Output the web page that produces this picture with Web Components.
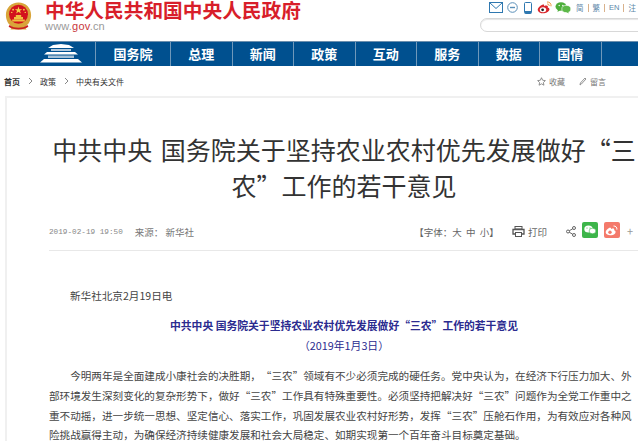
<!DOCTYPE html>
<html lang="zh">
<head>
<meta charset="utf-8">
<title>中共中央 国务院关于坚持农业农村优先发展做好“三农”工作的若干意见</title>
<style>
  html, body { margin: 0; padding: 0; background: #fff; overflow: hidden; height: 441px; }
  body { font-family: "Noto Sans CJK SC", "Liberation Sans", sans-serif; text-spacing-trim: space-all; }
</style>
</head>
<body>
<gov-header></gov-header>
<gov-nav>
  <a>国务院</a><a>总理</a><a>新闻</a><a>政策</a><a>互动</a><a>服务</a><a>数据</a><a>国情</a>
</gov-nav>
<gov-crumbs></gov-crumbs>
<gov-article>
  <span slot="title">中共中央 国务院关于坚持农业农村优先发展做好“三农”工作的若干意见</span>
  <p>新华社北京2月19日电</p>
  <h2>中共中央 国务院关于坚持农业农村优先发展做好“三农”工作的若干意见</h2>
  <h3>（2019年1月3日）</h3>
  <p class="body">今明两年是全面建成小康社会的决胜期，“三农”领域有不少必须完成的硬任务。党中央认为，在经济下行压力加大、外部环境发生深刻变化的复杂形势下，做好“三农”工作具有特殊重要性。必须坚持把解决好“三农”问题作为全党工作重中之重不动摇，进一步统一思想、坚定信心、落实工作，巩固发展农业农村好形势，发挥“三农”压舱石作用，为有效应对各种风险挑战赢得主动，为确保经济持续健康发展和社会大局稳定、如期实现第一个百年奋斗目标奠定基础。</p>
</gov-article>

<script>
class GovHeader extends HTMLElement {
  constructor() {
    super();
    this.attachShadow({ mode: "open" });
    this.shadowRoot.innerHTML = `
      <style>
        :host { display: flex; height: 41px; justify-content: space-between; overflow: hidden; }
        .brand { display: flex; gap: 13px; padding-left: 5px; }
        .emblem { width: 27px; height: 32px; }
        .name { color: #d81e2a; font-size: 19.700px; font-weight: 700; line-height: 20px; white-space: nowrap; }
        .url { font: 11px/12px "Liberation Sans", sans-serif; color: #9a9a9a; letter-spacing: .2px; }
        .url b { color: #c8363c; font-weight: 400; }
        .tools { width: 158px; }
        .icons { display: flex; align-items: center; height: 15px; font-size: 7.500px; color: #5a86a8; white-space: nowrap; }
        .icons svg { display: block; flex: none; }
        .icons i { width: 1px; height: 8px; background: #d9b28c; margin: 0 4px; }
        .search { margin-top: 3px; height: 12px; border: 1px solid #d8d8d8; border-radius: 7px; box-shadow: inset 0 1px 1px #e6e6e6; margin-right: -20px; background: #fff; }
      </style>
      <div class="brand">
        <svg class="emblem" viewBox="0 0 30 32">
          <path d="M15 1C7 1 1 7 1 15c0 6 3 11 7 13l-2 3h18l-2-3c4-2 7-7 7-13 0-8-6-14-14-14z" fill="#d9a53a"/>
          <circle cx="15" cy="14" r="10.500" fill="#d3121d"/>
          <path d="M15 5.500l1 3h3.100l-2.500 1.800 1 3-2.600-1.900-2.600 1.900 1-3-2.500-1.800H14z" fill="#f6d24a"/>
          <g fill="#f6d24a"><circle cx="9" cy="9" r="1"/><circle cx="21" cy="9" r="1"/><circle cx="7.500" cy="12" r=".8"/><circle cx="22.500" cy="12" r=".8"/></g>
          <path d="M8 20h14v2H8zM10 17h10v2.500H10zM12 15h6v2h-6z" fill="#f0c040"/>
          <path d="M5 26c3 2.500 6 3 10 3s7-.5 10-3l1 2c-3 2-7 3-11 3s-8-1-11-3z" fill="#c8201f"/>
        </svg>
        <div>
          <div class="name">中华人民共和国中央人民政府</div>
          <div class="url">www.<b>gov</b>.cn</div>
        </div>
      </div>
      <div class="tools">
        <div class="icons">
          <svg width="14" height="11" viewBox="0 0 14 11" style="margin-left:9px" fill="none" stroke="#2f78b0"><rect x=".5" y=".5" width="13" height="10"/><path d="M.5.5 7 6.500 13.500.5"/></svg>
          <svg width="11" height="11" viewBox="0 0 11 11" style="margin-left:4px" fill="none" stroke="#5a8fb8"><circle cx="5.500" cy="5.500" r="4.800"/><path d="M3 5.500h5" stroke-width="1.400"/></svg>
          <svg width="8" height="12" viewBox="0 0 8 12" style="margin-left:6px"><rect x=".5" y=".5" width="7" height="11" rx="1" fill="#fff" stroke="#2f78b0"/><rect x="1" y="9" width="6" height="2.500" fill="#2f78b0"/></svg>
          <svg width="15" height="13" viewBox="0 0 15 13" style="margin-left:5px"><path d="M6 3.500C3 4.500.5 7 .8 9.200c.4 2.300 3.600 3.400 6.400 3 3-.4 5.300-2 5.300-3.900 0-1.100-1-1.700-1.800-1.900.5-1.300.1-2.100-1.600-2-.9 0-1.800.4-2 .6.200-1-.1-1.800-1.100-1.500z" fill="#d9262c"/><ellipse cx="6" cy="8.700" rx="3.200" ry="2.500" fill="#fff"/><circle cx="5.600" cy="8.800" r="1.400" fill="#222"/><path d="M10 1c2.500-.3 4.500 1.700 4 4.300M10.200 3c1.200-.2 2.200.8 1.900 2" fill="none" stroke="#f0963a" stroke-width="1"/></svg>
          <svg width="16" height="12" viewBox="0 0 16 12" style="margin-left:3px"><ellipse cx="6" cy="4.500" rx="5.500" ry="4.300" fill="#4cae3a"/><path d="M3 7.500 2.500 10l3-2z" fill="#4cae3a"/><ellipse cx="11.300" cy="7" rx="4.500" ry="3.600" fill="#5cb848" stroke="#fff" stroke-width=".6"/><path d="M13 9.500l.8 2-2.500-1.500z" fill="#5cb848"/><circle cx="4.200" cy="3.500" r=".7" fill="#fff"/><circle cx="7.800" cy="3.500" r=".7" fill="#fff"/></svg>
          <span style="margin-left:5px">简</span><i></i><span>繁</span><i></i><span style="font-family:'Liberation Sans',sans-serif">EN</span><i></i><span>注</span>
        </div>
        <div class="search"></div>
      </div>
    `;
  }
}

class GovNav extends HTMLElement {
  constructor() {
    super();
    this.attachShadow({ mode: "open" });
    this.shadowRoot.innerHTML = `
      <style>
        :host { display: flex; height: 24px; background: #00508f; border-top: 1px solid #6c8fae; }
        .home { width: 96px; flex: none; display: flex; justify-content: flex-end; padding-right: 13px; box-sizing: border-box; border-right: 1px solid #6f98ba; }
        svg { display: block; margin-top: 2px; }
        slot { display: contents; }
        ::slotted(a) {
          flex: 0 0 61.500px; box-sizing: border-box; text-align: center; color: #fff; font-size: 13px; font-weight: 700;
          line-height: 24px; border-right: 1px solid #6f98ba;
        }
        ::slotted(a:first-of-type) { flex-basis: 75px; }
      </style>
      <div class="home">
        <svg width="42" height="19" viewBox="0 0 42 19" fill="#fff">
          <path d="M13 1 21 0l8 1 5 3H8z"/>
          <path d="M11 5h20v2H11z" opacity=".7"/>
          <path d="M7 8h28l3 2.500H4z"/>
          <path d="M8 11.500h26V14H8z" opacity=".65"/>
          <path d="M4 15h34l4 3.500H0z"/>
        </svg>
      </div>
      <slot></slot>
    `;
  }
}

class GovCrumbs extends HTMLElement {
  constructor() {
    super();
    this.attachShadow({ mode: "open" });
    this.shadowRoot.innerHTML = `
      <style>
        :host { display: flex; height: 30px; align-items: center; padding: 0 32px 0 4px; font-size: 8px; color: #333; justify-content: space-between; }
        .path, .acts { display: flex; align-items: center; }
        b { font-weight: 700; }
        .sep { margin: 0 7.500px; display: block; }
        .acts { color: #777; gap: 3px; }
        .acts svg { display: block; }
        .acts span { margin-right: 11px; }
        .acts span:last-child { margin-right: 0; }
      </style>
      <div class="path">
        <b>首页</b>
        <svg class="sep" width="5" height="8" viewBox="0 0 5 8" fill="none" stroke="#888"><path d="M1 1l3 3-3 3"/></svg>
        <span>政策</span>
        <svg class="sep" width="5" height="8" viewBox="0 0 5 8" fill="none" stroke="#888"><path d="M1 1l3 3-3 3"/></svg>
        <span>中央有关文件</span>
      </div>
      <div class="acts">
        <svg width="9" height="9" viewBox="0 0 10 10" fill="none" stroke="#777" stroke-width=".9"><path d="M5 .8l1.300 2.800 3 .4-2.200 2.100.6 3L5 7.600 2.300 9.100l.6-3L.7 4l3-.4z"/></svg><span>收藏</span>
        <svg width="8" height="9" viewBox="0 0 8 9" fill="none" stroke="#888" stroke-width=".9"><path d="M1 8l.4-2L6 1l1 1-4.600 5z"/></svg><span>留言</span>
      </div>
    `;
  }
}

class GovMeta extends HTMLElement {
  constructor() {
    super();
    this.attachShadow({ mode: "open" });
    this.shadowRoot.innerHTML = `
      <style>
        :host { display: flex; justify-content: space-between; align-items: center; height: 27px; padding-bottom: 5px; border-bottom: 1px solid #e8e8e8; font-size: 9.500px; color: #777; white-space: nowrap; }
        .left, .right { display: flex; align-items: center; }
        .date { font: 7.700px "Liberation Mono", monospace; color: #888; margin-right: 12px; }
        .right { color: #666; padding-right: 5px; }
        .right svg { display: block; flex: none; }
        .tile { width: 16px; height: 16px; border-radius: 2px; display: flex; align-items: center; justify-content: center; margin-bottom: 3px; }
      </style>
      <div class="left"><span class="date">2019-02-19 19:50</span><span>来源：&nbsp;新华社</span></div>
      <div class="right">
        <span>【字体：大 &nbsp;中 &nbsp;小】</span>
        <svg style="margin-left:13px" width="13" height="11" viewBox="0 0 13 11" fill="none" stroke="#555"><rect x="3" y=".5" width="7" height="2.500"/><path d="M3 8H1V3.500h11V8h-2" stroke-width="1.300"/><rect x="3.500" y="6.500" width="6" height="4"/></svg>
        <span style="margin-left:3px">打印</span>
        <svg style="margin-left:19px" width="10" height="11" viewBox="0 0 10 11" fill="none" stroke="#555" stroke-width=".9"><circle cx="2" cy="5.500" r="1.500"/><circle cx="8" cy="2" r="1.500"/><circle cx="8" cy="9" r="1.500"/><path d="M3.300 4.700 6.700 2.800M3.300 6.300l3.400 1.900"/></svg>
        <div class="tile" style="background:#3db54a;margin-left:6px"><svg width="12" height="10" viewBox="0 0 12 10"><ellipse cx="4.500" cy="4" rx="4.200" ry="3.500" fill="#fff"/><ellipse cx="8.500" cy="6" rx="3.400" ry="2.800" fill="#fff" stroke="#3db54a" stroke-width=".6"/><circle cx="3" cy="3" r=".6" fill="#3db54a"/><circle cx="6" cy="3" r=".6" fill="#3db54a"/></svg></div>
        <div class="tile" style="background:#f47a6b;margin-left:6px"><svg width="13" height="11" viewBox="0 0 13 11"><path d="M5 2.500C2.500 3.500.5 5.500.7 7.500c.3 2 3 3 5.400 2.700 2.600-.3 4.500-1.700 4.500-3.300 0-1-.8-1.400-1.500-1.600.4-1.100.1-1.800-1.400-1.700-.8 0-1.500.4-1.700.5.200-.9 0-1.500-1-1.100z" fill="#fff"/><circle cx="5" cy="7.300" r="1.700" fill="#f47a6b"/><path d="M8.500 1c2-.2 3.800 1.400 3.400 3.600" fill="none" stroke="#fff"/></svg></div>
        <span style="margin-left:7px;color:#999;font-size:11px;line-height:11px">+</span>
      </div>
    `;
  }
}

class GovArticle extends HTMLElement {
  constructor() {
    super();
    this.attachShadow({ mode: "open" });
    this.shadowRoot.innerHTML = `
      <style>
        :host { display: block; margin-left: 5px; padding: 33px 0 0 42px; border-left: 2px solid #f0f0f0; border-top: 2px solid #f0f0f0; color: #444; }
        h1 { margin: 0; width: 590px; font-size: 25px; font-weight: 400; line-height: 36px; color: #333; text-align: center; word-spacing: 3px; }
        gov-meta { margin-top: 15px; }
        .content { width: 590px; margin-top: 35px; font-size: 10.600px; line-height: 19.700px; }
        ::slotted(p) { margin: 0; font-size: 10.600px; line-height: 19.700px; color: #444; }
        ::slotted(p:first-of-type) { padding-left: 21px; margin-bottom: 10px; }
        ::slotted(h2), ::slotted(h3) { margin: 0; text-align: center; color: #2b2b8f; font-size: 10.800px; line-height: 19.700px; }
        ::slotted(h2) { font-weight: 700; }
        ::slotted(h3) { font-weight: 400; margin-top: 1px; }
        ::slotted(p.body) { text-indent: 2em; margin-top: 10px; }
      </style>
      <h1><slot name="title"></slot></h1>
      <gov-meta></gov-meta>
      <div class="content"><slot></slot></div>
    `;
  }
}

customElements.define("gov-header", GovHeader);
customElements.define("gov-nav", GovNav);
customElements.define("gov-crumbs", GovCrumbs);
customElements.define("gov-meta", GovMeta);
customElements.define("gov-article", GovArticle);
</script>
</body>
</html>
